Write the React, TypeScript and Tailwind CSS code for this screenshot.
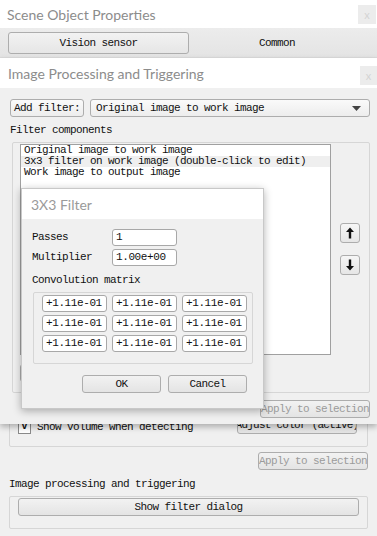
import React from "react";

const mono = { fontFamily: '"Liberation Mono", "DejaVu Sans Mono", monospace' };
const sans = { fontFamily: 'Lato, "Noto Sans", sans-serif' };

function Btn({ children, className = "", disabled = false }: { children?: React.ReactNode; className?: string; disabled?: boolean }) {
  return (
    <div
      className={`flex items-center justify-center rounded-[3px] border border-[#adadad] bg-gradient-to-b from-[#f2f2f2] to-[#e4e4e4] text-[11px] tracking-[-0.6px] whitespace-nowrap overflow-hidden ${disabled ? "text-[#9b9b9b]" : "text-[#111]"} ${className}`}
    >
      {children}
    </div>
  );
}

function Field({ value, className = "" }: { value: string; className?: string }) {
  return (
    <div className={`flex items-center rounded-[3px] border border-[#a8a8a8] bg-white pl-[3px] text-[11px] tracking-[-0.4px] text-[#111] ${className}`}>
      {value}
    </div>
  );
}

function CloseBtn({ className = "" }: { className?: string }) {
  return (
    <div className={`flex items-center justify-center bg-[#ececec] text-[11px] leading-none text-[#d4d4d4] ${className}`} style={sans}>
      x
    </div>
  );
}

function ArrowBtn({ down = false }: { down?: boolean }) {
  return (
    <div className="flex h-[20px] w-[20px] items-center justify-center rounded-[3px] border border-[#adadad] bg-gradient-to-b from-[#f6f6f6] to-[#e6e6e6]">
      <svg width="10" height="12" viewBox="0 0 10 12" className={down ? "rotate-180" : ""}>
        <path d="M5 0.5 L9 5 L6.2 5 L6.2 11.5 L3.8 11.5 L3.8 5 L1 5 Z" fill="#111" />
      </svg>
    </div>
  );
}

export default function App() {
  const cells = Array.from({ length: 9 }, () => "+1.11e-01");

  return (
    <div className="relative h-[536px] w-[377px] overflow-hidden bg-[#f0f0f0] text-[#111]" style={mono}>
      {/* Base window: Scene Object Properties */}
      <div className="flex h-[28px] items-start justify-between bg-white">
        <span className="mt-[4px] pl-[7px] text-[14px] text-[#8c8c8c]" style={sans}>
          Scene Object Properties
        </span>
        <CloseBtn className="mr-[1px] mt-[5px] h-[19px] w-[18px]" />
      </div>
      <div className="flex h-[30px] items-center border-b border-[#dcdcdc] bg-gradient-to-b from-[#ececec] to-[#e4e4e4] pl-[8px] pt-[1px]">
        <Btn className="h-[22px] w-[181px] from-[#efefef] to-[#e6e6e6]">Vision sensor</Btn>
        <div className="flex flex-1 justify-center pr-[12px] text-[11px] tracking-[-0.6px]">Common</div>
      </div>

      <div className="flex flex-col px-[9px]">
        <div className="mt-[321px] flex h-[68px] flex-col justify-end rounded-[2px] border border-[#d6d6d6] pb-[12px] pl-[8px] pr-[10px]">
          <div className="flex h-[18px] items-center justify-between">
            <div className="mt-[4px] flex items-center gap-[6px]">
              <div className="flex h-[13px] w-[13px] items-center justify-center border border-[#8a8a8a] bg-white text-[10px] font-bold leading-none">v</div>
              <span className="text-[11px] tracking-[-0.6px]">Show volume when detecting</span>
            </div>
            <Btn className="h-[18px] w-[120px] !tracking-[-0.75px]">Adjust color (active)</Btn>
          </div>
        </div>
        <Btn disabled className="mt-[5px] h-[18px] w-[110px] self-end">Apply to selection</Btn>
        <div className="mt-[8px] h-[12px] text-[11px] leading-[12px] tracking-[-0.6px]">Image processing and triggering</div>
        <div className="mt-[6px] h-[33px] rounded-[2px] border border-[#d6d6d6] px-[8px] pt-[1px]">
          <Btn className="h-[18px] w-full">Show filter dialog</Btn>
        </div>
      </div>

      {/* Overlay window: Image Processing and Triggering */}
      <div className="absolute left-0 top-[58px] flex h-[366px] w-[377px] flex-col bg-[#f0f0f0] shadow-[0_3px_6px_rgba(0,0,0,0.28)]">
        <div className="flex h-[30px] items-start justify-between bg-white">
          <span className="mt-[5px] pl-[8px] text-[14px] text-[#8c8c8c]" style={sans}>
            Image Processing and Triggering
          </span>
          <CloseBtn className="mt-[8px] h-[19px] w-[17px]" />
        </div>
        <div className="ml-[10px] mt-[11px] flex gap-[6px]">
          <Btn className="h-[18px] w-[74px] from-[#fafafa] to-[#ededed]">Add filter:</Btn>
          <div className="flex h-[18px] w-[280px] items-center justify-between rounded-[3px] border border-[#adadad] bg-gradient-to-b from-[#fafafa] to-[#ededed] pl-[5px] pr-[8px] text-[11px] tracking-[-0.6px]">
            <span>Original image to work image</span>
            <svg width="9" height="5" viewBox="0 0 9 5">
              <path d="M0 0 H9 L4.5 5 Z" fill="#444" />
            </svg>
          </div>
        </div>
        <div className="ml-[10px] mt-[7px] h-[12px] text-[11px] leading-[12px] tracking-[-0.6px]">Filter components</div>
        <div className="ml-[12px] mt-[6px] flex h-[251px] w-[358px] rounded-[2px] border border-[#d6d6d6] pl-[7px] pt-[1px]">
          <div className="flex flex-col">
            <div className="flex h-[211px] w-[311px] flex-col border border-[#a0a0a0] bg-white">
              {["Original image to work image", "3x3 filter on work image (double-click to edit)", "Work image to output image"].map((t, i) => (
                <div
                  key={t}
                  className={`h-[11px] pl-[3px] text-[11px] leading-[11px] tracking-[-0.6px] whitespace-nowrap ${i === 1 ? "bg-[#efefef]" : ""}`}
                >
                  {t}
                </div>
              ))}
            </div>
            <Btn className="mt-[9px] h-[18px] w-[110px]"> </Btn>
          </div>
          <div className="ml-[9px] mt-[79px] flex flex-col gap-[12px]">
            <ArrowBtn />
            <ArrowBtn down />
          </div>
        </div>
        <Btn disabled className="mr-[7px] mt-[7px] h-[18px] w-[110px] self-end">Apply to selection</Btn>
      </div>

      {/* Dialog: 3X3 Filter */}
      <div className="absolute left-[21px] top-[188px] flex h-[221px] w-[243px] flex-col border border-[#c8c8c8] bg-[#f0f0f0] shadow-[0_2px_8px_rgba(0,0,0,0.3)]">
        <div className="flex h-[30px] items-center bg-white pl-[9px] text-[14px] text-[#9a9a9a]" style={sans}>
          3X3 Filter
        </div>
        <div className="flex flex-col pl-[10px]">
          <div className="mt-[10px] flex h-[17px] items-center">
            <span className="w-[80px] text-[11px] tracking-[-0.6px]">Passes</span>
            <Field value="1" className="h-[17px] w-[65px]" />
          </div>
          <div className="mt-[3px] flex h-[17px] items-center">
            <span className="w-[80px] text-[11px] tracking-[-0.6px]">Multiplier</span>
            <Field value="1.00e+00" className="h-[17px] w-[65px]" />
          </div>
          <div className="mt-[8px] h-[12px] text-[11px] leading-[12px] tracking-[-0.6px]">Convolution matrix</div>
          <div className="ml-[1px] mt-[6px] h-[72px] w-[220px] rounded-[2px] border border-[#d6d6d6] pl-[8px] pt-[2px]">
            <div className="grid grid-cols-[65px_65px_65px] gap-x-[5px] gap-y-[3px]">
              {cells.map((v, i) => (
                <Field key={i} value={v} className="h-[17px]" />
              ))}
            </div>
          </div>
          <div className="mr-[16px] mt-[11px] flex justify-end gap-[7px]">
            <Btn className="h-[18px] w-[79px]">OK</Btn>
            <Btn className="h-[18px] w-[79px]">Cancel</Btn>
          </div>
        </div>
      </div>
    </div>
  );
}
